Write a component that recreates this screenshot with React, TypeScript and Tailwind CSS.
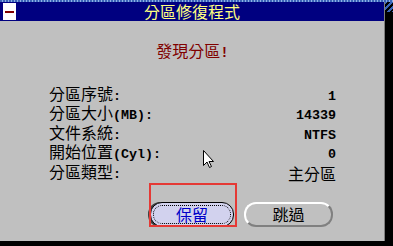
import React from "react";

const rows: [string, string][] = [
  ["分區序號:", "1"],
  ["分區大小(MB):", "14339"],
  ["文件系統:", "NTFS"],
  ["開始位置(Cyl):", "0"],
  ["分區類型:", "主分區"],
];

// ascii runs get a half-width mono face so they sit on the 8px grid like the bitmap font
function Mixed({ text }: { text: string }) {
  const parts = text.split(/([\x00-\x7f]+)/).filter(Boolean);
  return (
    <>
      {parts.map((p, i) =>
        /^[\x00-\x7f]+$/.test(p) ? (
          <span key={i} className="font-['Liberation_Mono',monospace] text-[13.33px] font-bold">
            {p}
          </span>
        ) : (
          <span key={i}>{p}</span>
        )
      )}
    </>
  );
}

function Cursor() {
  return (
    <svg width="12" height="19" viewBox="0 0 12 19" className="absolute left-[203px] top-[150px]">
      <path d="M0.5 0.5 L0.5 15.5 L4 12 L6.5 17.5 L8.5 16.5 L6 11.5 L10.5 11.5 Z" fill="#fff" stroke="#000" strokeWidth="1" />
    </svg>
  );
}

export default function App() {
  return (
    <div className="relative w-[393px] h-[246px] bg-black overflow-hidden font-['Noto_Sans_CJK_TC',sans-serif] text-[16px]">
      <div className="h-[2px] w-full bg-[repeating-linear-gradient(90deg,#3b64b8_0px,#3b64b8_2px,#8fb0e6_2px,#8fb0e6_3px)]" />
      <div className="flex">
        <div className="w-[385px] flex flex-col border-r border-[#808080]">
          <div className="h-[19px] bg-[#000080] flex items-center relative">
            <div className="absolute left-[3px] top-[1px] w-[13px] h-[17px] bg-white flex items-center justify-center">
              <div className="w-[9px] h-[2px] bg-[#800000]" />
            </div>
            <div className="w-full text-center text-[#ffff80] leading-[19px]">分區修復程式</div>
          </div>
          <div className="h-[220px] bg-[#c0c0c0] flex flex-col pl-[49px] pr-[48px] pt-[19px]">
            <div className="text-center text-[#800000] leading-[20px] -ml-[49px] -mr-[48px] pl-[1px]">
              發現分區<span className="font-['Liberation_Mono',monospace] font-bold text-[14px]">!</span>
            </div>
            <div className="mt-[22px] flex flex-col text-black">
              {rows.map(([k, v]) => (
                <div key={k} className="h-[19.5px] flex items-center justify-between leading-[16px]">
                  <span className="leading-[16px]"><Mixed text={k} /></span>
                  <span className="leading-[16px]"><Mixed text={v} /></span>
                </div>
              ))}
            </div>
            <div className="mt-[19px] flex gap-[10px] pl-[101px]">
              <div className="w-[84px] h-[25px] rounded-[12px] border border-black bg-[#d2d2ee] p-[2px] shadow-[-2px_0_0_#404040]">
                <div className="h-full rounded-[9px] border border-dotted border-black flex items-center justify-center text-[#0000c8] leading-none">
                  保留
                </div>
              </div>
              <div className="w-[89px] h-[25px] rounded-[12px] border-2 border-t-white border-l-white border-r-[#808080] border-b-[#808080] bg-[#c0c0c0] flex items-center justify-center text-black leading-none">
                跳過
              </div>
            </div>
          </div>
        </div>
        <div className="flex-1 h-[10px] bg-[repeating-linear-gradient(135deg,#3b64b8_0px,#3b64b8_2px,#000_2px,#000_4px)]" />
      </div>
      <div className="absolute left-[149px] top-[183px] w-[88px] h-[44px] border-2 border-[#e53935]" />
      <Cursor />
    </div>
  );
}
